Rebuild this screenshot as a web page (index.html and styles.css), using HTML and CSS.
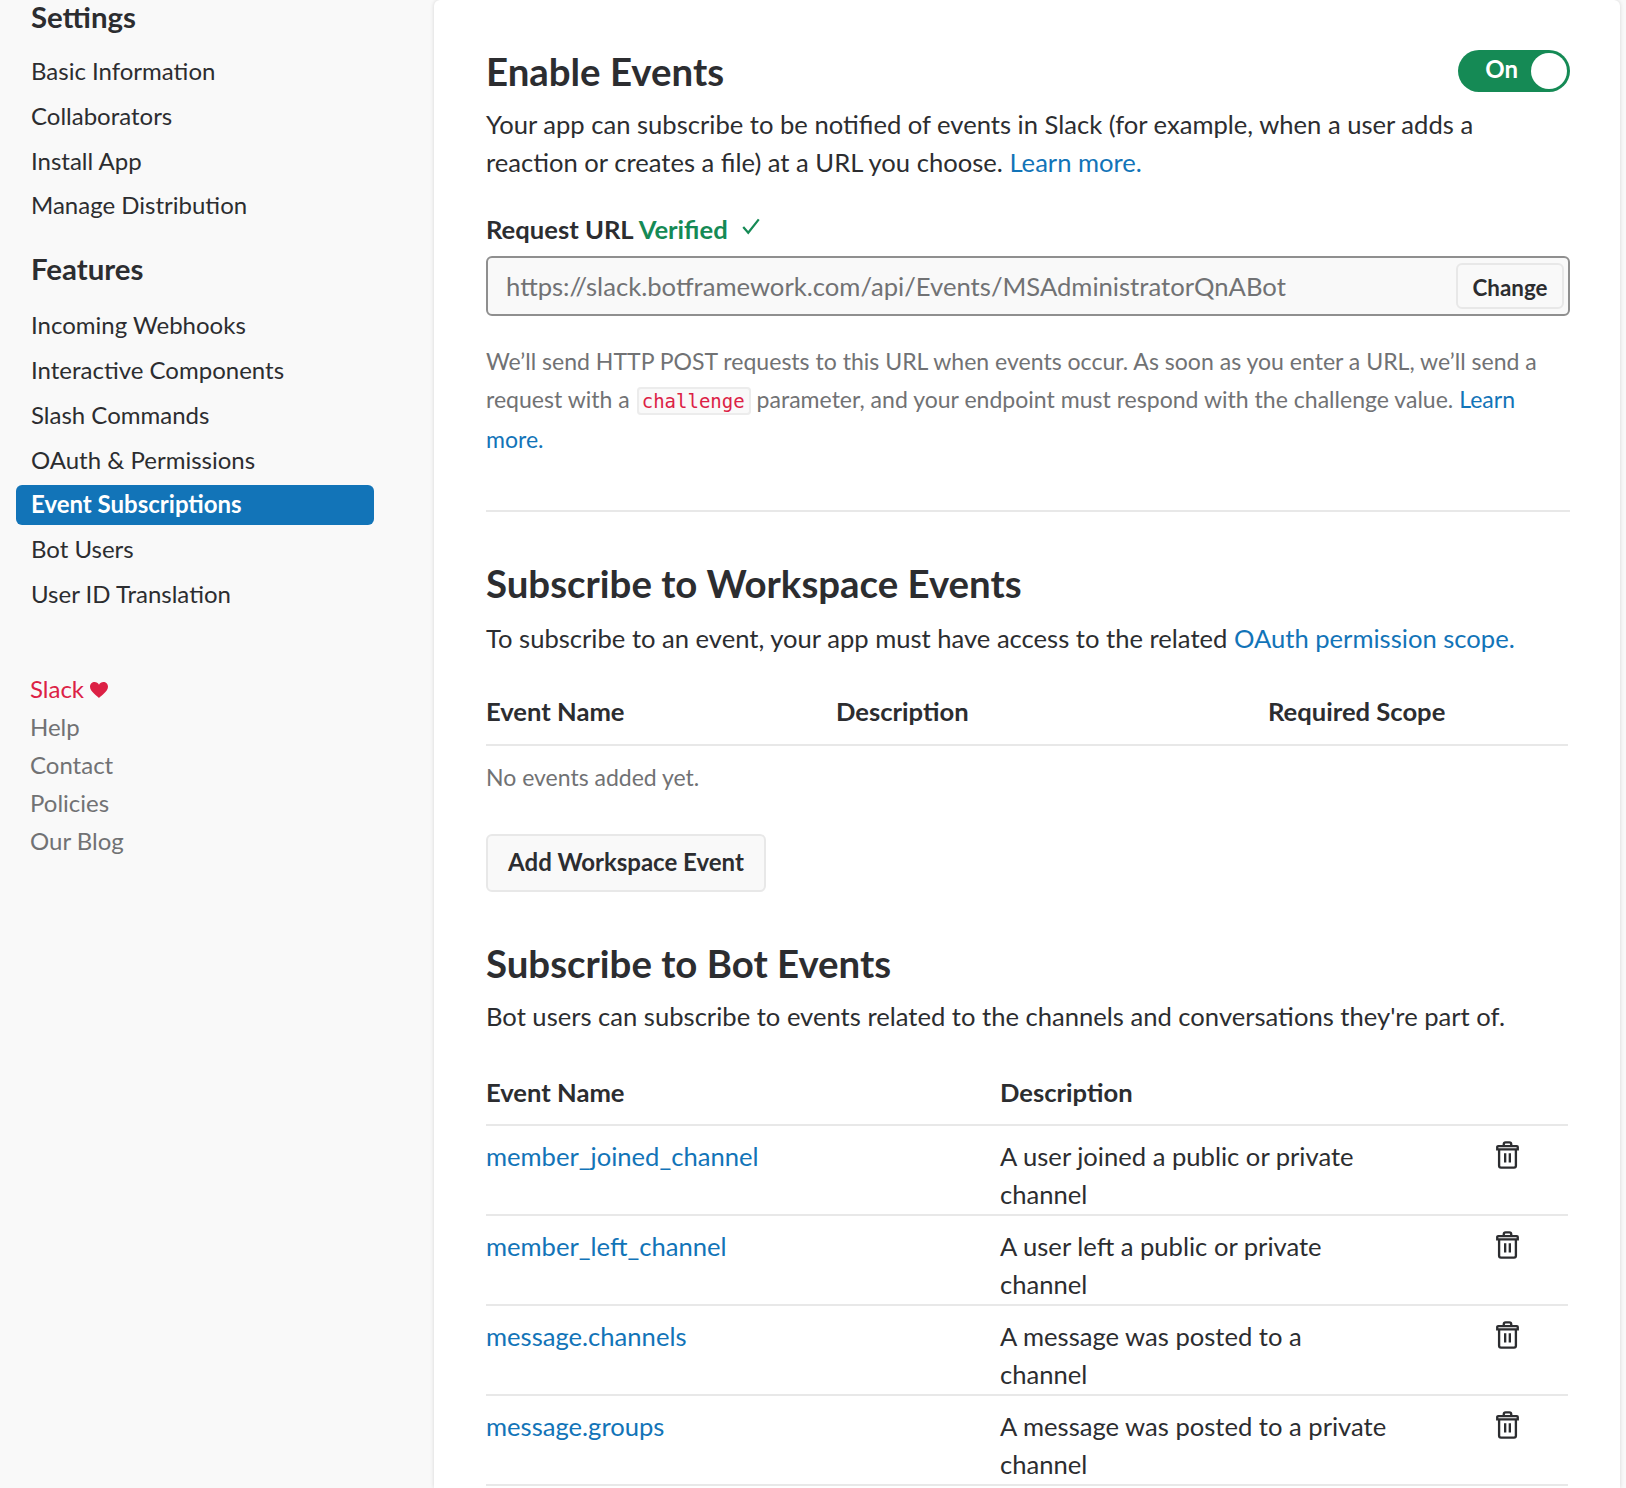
FILE: index.html
```html
<!DOCTYPE html>
<html>
<head>
  <meta charset="utf-8">
  <title>Event Subscriptions</title>
  <link rel="stylesheet" href="styles.css">
</head>
<body>
  <div class="page">
    <nav class="sidebar">
      <h3 class="nav-title nav-title-first">Settings</h3>
      <a class="nav-item">Basic Information</a>
      <a class="nav-item">Collaborators</a>
      <a class="nav-item">Install App</a>
      <a class="nav-item">Manage Distribution</a>
      <h3 class="nav-title">Features</h3>
      <a class="nav-item">Incoming Webhooks</a>
      <a class="nav-item">Interactive Components</a>
      <a class="nav-item">Slash Commands</a>
      <a class="nav-item">OAuth &amp; Permissions</a>
      <a class="nav-item active">Event Subscriptions</a>
      <a class="nav-item">Bot Users</a>
      <a class="nav-item">User ID Translation</a>
      <div class="foot-links">
        <a class="foot-slack">Slack
          <svg class="heart" viewBox="0 0 18 16"><path d="M9 16C7 14 0 9.500 0 4.800 0 2 2.100 0 4.600 0 6.500 0 8.100 1 9 2.800 9.900 1 11.500 0 13.400 0 15.900 0 18 2 18 4.800 18 9.500 11 14 9 16Z"/></svg>
        </a>
        <a>Help</a>
        <a>Contact</a>
        <a>Policies</a>
        <a>Our Blog</a>
      </div>
    </nav>

    <main class="card">
      <section class="enable">
        <div class="title-row">
          <h2>Enable Events</h2>
          <div class="toggle"><span>On</span><i class="knob"></i></div>
        </div>
        <p class="lead">Your app can subscribe to be notified of events in Slack (for example, when a user adds a reaction or creates a file) at a URL you choose. <a class="link">Learn more.</a></p>
        <div class="url-label">
          Request URL <span class="verified">Verified</span>
          <svg class="check" viewBox="0 0 18 16"><path d="M2 9l4.500 5L16 2"/></svg>
        </div>
        <div class="url-box">
          <span class="url-text">https://slack.botframework.com/api/Events/MSAdministratorQnABot</span>
          <button class="change">Change</button>
        </div>
        <p class="hint">We’ll send HTTP POST requests to this URL when events occur. As soon as you enter a URL, we’ll send a request with a <code>challenge</code> parameter, and your endpoint must respond with the challenge value. <a class="link">Learn more.</a></p>
      </section>

      <section class="workspace">
        <h2>Subscribe to Workspace Events</h2>
        <p class="lead">To subscribe to an event, your app must have access to the related <a class="link">OAuth permission scope.</a></p>
        <div class="thead thead-ws">
          <span>Event Name</span><span>Description</span><span>Required Scope</span>
        </div>
        <p class="empty">No events added yet.</p>
        <button class="add">Add Workspace Event</button>
      </section>

      <section class="bot">
        <h2>Subscribe to Bot Events</h2>
        <p class="lead">Bot users can subscribe to events related to the channels and conversations they're part of.</p>
        <div class="thead thead-bot">
          <span>Event Name</span><span>Description</span>
        </div>
        <div class="event-row">
          <a class="link">member_joined_channel</a>
          <span class="desc">A user joined a public or private channel</span>
          <svg class="trash" viewBox="0 0 24 30"><path d="M8 5V3.500A2 2 0 0 1 10 1.500h4a2 2 0 0 1 2 2V5M2 5.500h20a1 1 0 0 1 1 1V9H1V6.500a1 1 0 0 1 1-1ZM3 9v17.500a2 2 0 0 0 2 2h14a2 2 0 0 0 2-2V9M9.500 13v10M14.500 13v10"/></svg>
        </div>
        <div class="event-row">
          <a class="link">member_left_channel</a>
          <span class="desc">A user left a public or private channel</span>
          <svg class="trash" viewBox="0 0 24 30"><path d="M8 5V3.500A2 2 0 0 1 10 1.500h4a2 2 0 0 1 2 2V5M2 5.500h20a1 1 0 0 1 1 1V9H1V6.500a1 1 0 0 1 1-1ZM3 9v17.500a2 2 0 0 0 2 2h14a2 2 0 0 0 2-2V9M9.500 13v10M14.500 13v10"/></svg>
        </div>
        <div class="event-row">
          <a class="link">message.channels</a>
          <span class="desc">A message was posted to a channel</span>
          <svg class="trash" viewBox="0 0 24 30"><path d="M8 5V3.500A2 2 0 0 1 10 1.500h4a2 2 0 0 1 2 2V5M2 5.500h20a1 1 0 0 1 1 1V9H1V6.500a1 1 0 0 1 1-1ZM3 9v17.500a2 2 0 0 0 2 2h14a2 2 0 0 0 2-2V9M9.500 13v10M14.500 13v10"/></svg>
        </div>
        <div class="event-row">
          <a class="link">message.groups</a>
          <span class="desc">A message was posted to a private channel</span>
          <svg class="trash" viewBox="0 0 24 30"><path d="M8 5V3.500A2 2 0 0 1 10 1.500h4a2 2 0 0 1 2 2V5M2 5.500h20a1 1 0 0 1 1 1V9H1V6.500a1 1 0 0 1 1-1ZM3 9v17.500a2 2 0 0 0 2 2h14a2 2 0 0 0 2-2V9M9.500 13v10M14.500 13v10"/></svg>
        </div>
      </section>
    </main>
  </div>
</body>
</html>
```

FILE: styles.css
```css
* {
  box-sizing: border-box;
}

html, body {
  margin: 0;
  height: 1488px;
  overflow: hidden;
}

body {
  font-family: "Lato", "Liberation Sans", sans-serif;
  font-size: 25.600px;
  line-height: 38px;
  color: #2c2d30;
  background-color: #f9f9f9;
}

.page {
  display: flex;
  height: 1488px;
  padding-right: 6px;
}

/* sidebar */
.sidebar {
  width: 434px;
  flex: none;
  padding: 0 60px 0 16px;
  display: flex;
  flex-direction: column;
}

.nav-title {
  margin: 18.500px 0 18.500px 15px;
  font-size: 29.400px;
  line-height: 38px;
  font-weight: 700;
}

.nav-title-first {
  margin-top: -2px;
  margin-bottom: 16px;
}

.nav-item {
  display: block;
  height: 40px;
  margin-bottom: 4.800px;
  padding-left: 15px;
  line-height: 38px;
  font-size: 24px;
  border-radius: 6px;
  color: #2c2d30;
}

.nav-item.active {
  background-color: #1274b8;
  color: #fff;
  font-weight: 700;
}

.foot-links {
  display: flex;
  flex-direction: column;
  margin: 50.300px 0 0 14px;
  font-size: 24px;
  line-height: 38px;
  color: #717274;
}

.foot-slack {
  color: #dc2145;
}

.heart {
  width: 18px;
  height: 16px;
  fill: #dc2145;
}

/* main card */
.card {
  flex: 1;
  background-color: #fff;
  border-radius: 6px 6px 0 0;
  box-shadow: 0 0 4px rgba(0, 0, 0, 0.15);
  padding: 0 50px 0 52px;
}

h2 {
  margin: 0 0 9px;
  font-size: 38.400px;
  line-height: 50px;
  font-weight: 700;
}

p {
  margin: 0;
}

.link {
  color: #1274b8;
}

.enable {
  padding-top: 46px;
  padding-bottom: 52px;
  border-bottom: 2px solid #e8e8e8;
}

.title-row {
  display: flex;
  justify-content: space-between;
  align-items: flex-start;
}

.toggle {
  width: 112px;
  height: 42px;
  margin-top: 4px;
  border-radius: 21px;
  background-color: #158a55;
  display: flex;
  align-items: center;
  justify-content: flex-end;
  padding-right: 3px;
  color: #fff;
  font-weight: 700;
  font-size: 24px;
}

.toggle span {
  margin-right: 13px;
  margin-bottom: 4px;
}

.knob {
  width: 36px;
  height: 36px;
  border-radius: 50%;
  background-color: #fff;
}

.url-label {
  margin-top: 29px;
  font-weight: 700;
  display: flex;
  align-items: center;
}

.verified {
  color: #158a55;
  margin-left: 5px;
}

.check {
  width: 20px;
  height: 18px;
  margin: 0 0 6px 13px;
  fill: none;
  stroke: #158a55;
  stroke-width: 2;
}

.url-box {
  margin-top: 8px;
  height: 60px;
  border: 2px solid #8f8f8f;
  border-radius: 6px;
  background-color: #f9f9f9;
  display: flex;
  align-items: center;
  justify-content: space-between;
  padding: 0 4px 0 18px;
}

.url-text {
  color: #717274;
  font-size: 25.650px;
}

.change {
  height: 46px;
  width: 108px;
  padding: 2px 0 0;
  border: 2px solid #e8e8e8;
  border-radius: 6px;
  background-color: #f9f9f9;
  font: 700 22.400px "Lato", sans-serif;
  color: #2c2d30;
}

.hint {
  margin-top: 26px;
  font-size: 23.050px;
  line-height: 38px;
  color: #717274;
}

code {
  font-family: "DejaVu Sans Mono", monospace;
  font-size: 19px;
  color: #dc2145;
  background-color: #f9f9f9;
  border: 2px solid #ececec;
  border-radius: 4px;
  padding: 1px 4px 1px 3px;
  margin: 0 0 0 1px;
}

.workspace {
  padding-top: 46px;
}

.workspace h2 {
  margin-bottom: 10.500px;
}

.thead {
  display: grid;
  height: 54px;
  margin-top: 35px;
  margin-right: 2px;
  font-weight: 700;
  border-bottom: 2px solid #e8e8e8;
}

.thead-ws {
  grid-template-columns: 350px 432px 1fr;
}

.thead-bot {
  height: 53px;
  margin-top: 38px;
  grid-template-columns: 514px 1fr;
}

.empty {
  margin-top: 12px;
  font-size: 23px;
  color: #717274;
}

.add {
  display: block;
  margin-top: 38px;
  width: 280px;
  height: 58px;
  padding: 0 0 3px;
  border: 2px solid #e8e8e8;
  border-radius: 6px;
  background-color: #f9f9f9;
  font: 700 24px "Lato", sans-serif;
  color: #2c2d30;
}

.bot {
  padding-top: 46px;
}

.event-row {
  display: grid;
  grid-template-columns: 514px 390px 1fr;
  height: 90px;
  margin-right: 2px;
  padding-top: 11px;
  border-bottom: 2px solid #e8e8e8;
}

.trash {
  width: 23px;
  height: 28px;
  margin: 4px 0 0 106px;
  fill: none;
  stroke: #2c2d30;
  stroke-width: 2.500;
}
```
